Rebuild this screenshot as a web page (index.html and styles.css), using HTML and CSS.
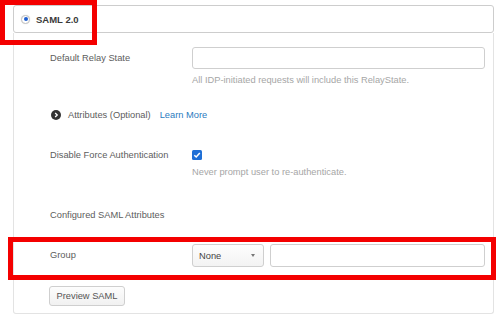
FILE: index.html
```html
<!DOCTYPE html>
<html lang="en">
<head>
    <meta charset="UTF-8">
    <title>SAML 2.0</title>
    <link rel="stylesheet" href="styles.css">
</head>
<body>
    <div class="page">
        <div class="sign-on-card">
            <span class="radio"><span class="radio-dot"></span></span>
            <span class="sign-on-title">SAML 2.0</span>
        </div>
        <div class="settings">
            <div class="row">
                <div class="label">Default Relay State</div>
                <div class="field">
                    <input class="text-input" type="text">
                    <div class="hint">All IDP-initiated requests will include this RelayState.</div>
                </div>
            </div>
            <div class="toggle-row">
                <svg class="toggle-icon" viewBox="0 0 12 12">
                    <circle cx="6" cy="6" r="6" fill="#333"/>
                    <path d="M5 3.5 L7.5 6 L5 8.5" fill="none" stroke="#fff" stroke-width="1.6"/>
                </svg>
                <span class="toggle-text">Attributes (Optional)</span>
                <a class="learn-more" href="#">Learn More</a>
            </div>
            <div class="row row-check">
                <div class="label">Disable Force Authentication</div>
                <div class="field">
                    <div class="check-line">
                        <svg class="checkbox" viewBox="0 0 10 10">
                            <rect width="10" height="10" rx="1.5" fill="#1f6fd6"/>
                            <path d="M2.3 5.2 L4.2 7 L7.8 2.9" fill="none" stroke="#fff" stroke-width="1.5"/>
                        </svg>
                    </div>
                    <div class="hint hint-check">Never prompt user to re-authenticate.</div>
                </div>
            </div>
            <div class="section-title">Configured SAML Attributes</div>
            <div class="row row-group">
                <div class="label">Group</div>
                <div class="field group-fields">
                    <div class="select">
                        <span>None</span>
                        <span class="select-arrow"></span>
                    </div>
                    <input class="text-input group-input" type="text">
                </div>
            </div>
            <button class="preview-btn">Preview SAML</button>
        </div>
    </div>
    <div class="highlight highlight-top"></div>
    <div class="highlight highlight-group"></div>
</body>
</html>
```

FILE: styles.css
```css
body {
    margin: 0;
    background: #fff;
    font-family: 'Liberation Sans', Arial, sans-serif;
    color: #5d5d5d;
    font-size: 9.3px;
}
.page {
    padding: 5px 0 0 13px;
    width: 481px;
}
.sign-on-card {
    height: 26px;
    border: 1px solid #cdcdcd;
    border-radius: 3px;
    display: flex;
    align-items: center;
    padding-left: 7px;
}
.radio {
    width: 7px;
    height: 7px;
    border-radius: 50%;
    border: 1px solid #c4c4c4;
    background: #fff;
    display: flex;
    align-items: center;
    justify-content: center;
    box-shadow: 0 0 1px rgba(0,0,0,0.2);
}
.radio-dot {
    width: 4px;
    height: 4px;
    border-radius: 50%;
    background: #1f5fd0;
}
.sign-on-title {
    margin-left: 6px;
    font-weight: 700;
    font-size: 9.5px;
    color: #3a3a3a;
}
.settings {
    height: 266px;
    width: 443px;
    border: 1px solid #e3e3e3;
    border-top: none;
    border-radius: 0 0 3px 3px;
    padding: 14px 0 0 36px;
    display: flex;
    flex-direction: column;
    align-items: flex-start;
}
.row {
    display: grid;
    grid-template-columns: 142px 293px;
}
.label {
    line-height: 22px;
}
.text-input {
    display: block;
    box-sizing: border-box;
    width: 293px;
    height: 22px;
    margin: 0;
    border: 1px solid #cfcfcf;
    border-radius: 3px;
    background: #fff;
}
.hint {
    margin-top: 4px;
    line-height: 14px;
    font-size: 9.3px;
    color: #a6a6a6;
}
.toggle-row {
    margin-top: 21px;
    display: flex;
    align-items: center;
    height: 14px;
    margin-left: 1px;
}
.toggle-icon {
    width: 10px;
    height: 10px;
}
.toggle-text {
    margin-left: 7px;
}
.learn-more {
    margin-left: 9px;
    color: #2b7bc0;
    text-decoration: none;
}
.row-check {
    margin-top: 26px;
}
.row-check .label {
    line-height: 14px;
}
.check-line {
    height: 14px;
    display: flex;
    align-items: center;
}
.checkbox {
    width: 10px;
    height: 10px;
}
.hint-check {
    margin-top: 3px;
}
.section-title {
    margin-top: 29px;
    line-height: 14px;
}
.row-group {
    margin-top: 22px;
}
.row-group .label {
    line-height: 23px;
}
.group-fields {
    display: flex;
    gap: 6px;
}
.select {
    box-sizing: border-box;
    width: 72px;
    height: 23px;
    border: 1px solid #cfcfcf;
    border-radius: 3px;
    background: linear-gradient(#fdfdfd, #f3f3f3);
    display: flex;
    align-items: center;
    justify-content: space-between;
    padding: 0 8px 0 6px;
    color: #444;
}
.select-arrow {
    width: 0;
    height: 0;
    border-left: 2.5px solid transparent;
    border-right: 2.5px solid transparent;
    border-top: 3px solid #777;
}
.group-input {
    width: 215px;
    height: 23px;
}
.preview-btn {
    margin-top: 19px;
    margin-left: -1px;
    width: 76px;
    height: 20px;
    padding: 0;
    border: 1px solid #cfcfcf;
    border-radius: 3px;
    background: linear-gradient(#fdfdfd, #f1f1f1);
    font-family: 'Liberation Sans', Arial, sans-serif;
    font-size: 9.3px;
    color: #555;
}
.highlight {
    position: absolute;
    box-sizing: border-box;
    border: 5px solid #f40000;
}
.highlight-top {
    left: 0;
    top: 0;
    width: 97px;
    height: 45px;
}
.highlight-group {
    left: 8px;
    top: 237px;
    width: 488px;
    height: 43px;
}
```
